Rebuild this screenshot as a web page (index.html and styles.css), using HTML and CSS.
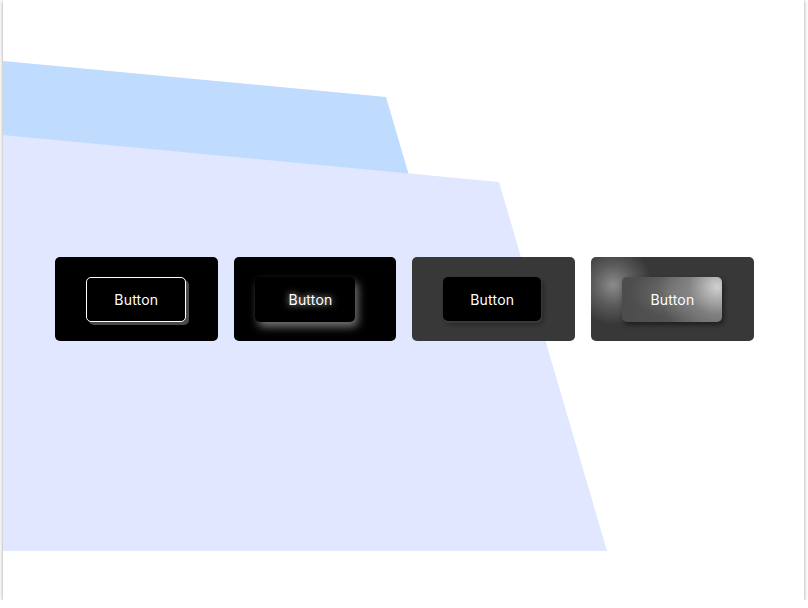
FILE: index.html
```html
<!DOCTYPE html>
<html>
<head>
<meta charset="utf-8">
<link rel="stylesheet" href="styles.css">
</head>
<body>
<div class="frame">
  <div class="shape shape-blue"></div>
  <div class="shape shape-lavender"></div>
  <div class="row">
    <div class="card card-black">
      <button class="btn btn-outline">Button</button>
    </div>
    <div class="card card-black">
      <button class="btn btn-glow">Button</button>
    </div>
    <div class="card card-gray">
      <button class="btn btn-solid">Button</button>
    </div>
    <div class="card card-gray card-spot">
      <button class="btn btn-glass">Button</button>
    </div>
  </div>
</div>
</body>
</html>
```

FILE: styles.css
```css
html, body {
  margin: 0;
  padding: 0;
  background: #ffffff;
}
.frame {
  position: relative;
  margin-left: 3px;
  width: 801px;
  height: 600px;
  background: #ffffff;
  overflow: hidden;
  box-shadow: 0 1px 4px rgba(0, 0, 0, 0.4);
}
.shape {
  position: absolute;
  left: 0;
  top: 0;
  width: 801px;
  height: 600px;
}
.shape-blue {
  background: #bfdbfe;
  clip-path: polygon(0 61px, 383px 97px, 516px 551px, 0 551px);
}
.shape-lavender {
  background: #e0e7ff;
  clip-path: polygon(0 135px, 496px 182px, 604px 551px, 0 551px);
}
.row {
  position: relative;
  display: flex;
  gap: 16px;
  padding: 257px 0 0 52px;
}
.card {
  position: relative;
  width: 162.7px;
  height: 84px;
  border-radius: 5px;
  display: flex;
  align-items: center;
  justify-content: center;
  overflow: hidden;
}
.card-black { background: #000000; }
.card-gray { background: #383838; }
.btn {
  position: relative;
  width: 100px;
  height: 45px;
  border-radius: 5px;
  border: none;
  background: #000;
  color: #ffffff;
  font-family: "Inter", "Noto Sans", sans-serif;
  font-size: 14px;
  letter-spacing: 0.2px;
  padding: 0;
  cursor: pointer;
}
.btn-outline {
  border: 1px solid #ffffff;
  box-shadow: 3px 3px 0 #4a4a4a;
  margin-top: 1px;
}
.btn-glow {
  margin-right: 20px;
  padding-left: 11px;
  box-shadow: 3px 5px 8px rgba(255, 255, 255, 0.45);
  text-shadow: 0 0 7px rgba(255, 255, 255, 0.9);
}
.btn-solid {
  width: 98px;
  height: 44px;
  margin-right: 3px;
  box-shadow: 1px 2px 2px rgba(255, 255, 255, 0.12), 2px 3px 4px rgba(0, 0, 0, 0.45);
}
.card-spot::before {
  content: "";
  position: absolute;
  left: -18px;
  top: -12px;
  width: 80px;
  height: 80px;
  border-radius: 50%;
  background: radial-gradient(circle, rgba(255, 255, 255, 0.42) 0%, rgba(255, 255, 255, 0.18) 35%, rgba(255, 255, 255, 0) 70%);
}
.btn-glass {
  background:
    radial-gradient(circle at 95% 22%, rgba(215, 215, 215, 0.95) 0%, rgba(170, 170, 170, 0.45) 28%, rgba(120, 120, 120, 0) 58%),
    radial-gradient(ellipse at 50% 35%, rgba(140, 140, 140, 0.45) 0%, rgba(100, 100, 100, 0) 60%),
    linear-gradient(90deg, #4c4c4c 0%, #5c5c5c 100%);
  box-shadow: 2px 3px 5px rgba(0, 0, 0, 0.45);
}
```
